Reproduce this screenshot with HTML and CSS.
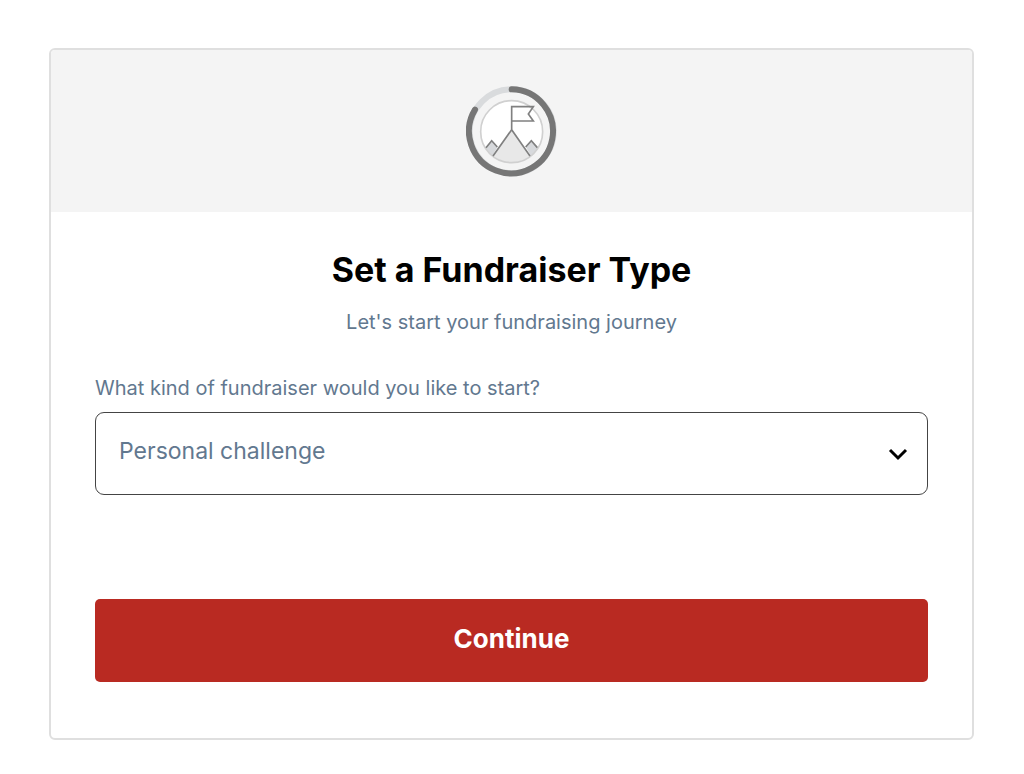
FILE: index.html
```html
<!DOCTYPE html>
<html lang="en">
<head>
<meta charset="utf-8">
<meta name="viewport" content="width=device-width, initial-scale=1">
<title>Set a Fundraiser Type</title>
<link rel="stylesheet" href="styles.css">
</head>
<body>
<main class="card">
  <header class="card-header">
    <svg class="progress" viewBox="32 27 276 276" aria-hidden="true">
      <defs>
        <clipPath id="disc"><circle cx="169" cy="167" r="92"/></clipPath>
      </defs>
      <circle cx="169" cy="166" r="126" fill="none" stroke="#d9dbdd" stroke-width="18"/>
      <path d="M169 40A126 126 0 1 1 59 101" fill="none" stroke="#767676" stroke-width="18" stroke-linecap="round"/>
      <circle cx="169" cy="167" r="93" fill="#fff"/>
      <g clip-path="url(#disc)">
        <path d="M86 220L109 194L126 214L110 242V262H80ZM252 220L228 194L212 214L228 242V262H258Z" fill="#d7d9dc"/>
        <path d="M169 161L98 262H240Z" fill="#e8e8e8"/>
      </g>
      <circle cx="169" cy="167" r="93" fill="none" stroke="#d0d0d0" stroke-width="5"/>
      <path d="M92 215L109 194L126 213M211 213L228 194L246 215M113 240L169 161L224 240M169 161V92H234L219 114L234 135H169" fill="none" stroke="#808080" stroke-width="5" stroke-linejoin="miter"/>
    </svg>
  </header>
  <form class="card-body">
    <h1 class="title">Set a Fundraiser Type</h1>
    <p class="subtitle">Let's start your fundraising journey</p>
    <label class="label" for="kind">What kind of fundraiser would you like to start?</label>
    <div class="select-wrap">
      <select class="select" id="kind">
        <option>Personal challenge</option>
      </select>
      <svg class="chevron" viewBox="0 0 20 20" aria-hidden="true"><path d="M2 6L10 14L18 6" fill="none" stroke="#000" stroke-width="3"/></svg>
    </div>
    <button class="button" type="button">Continue</button>
  </form>
</main>
</body>
</html>
```
FILE: styles.css
```css
* {
  box-sizing: border-box;
}

body {
  margin: 0;
  padding: 48px 50px 34px 49px;
  background: #fff;
  color: #000;
  font-family: Inter, "Liberation Sans", sans-serif;
}

.card {
  border: 2px solid #dfdfdf;
  border-radius: 6px;
  overflow: hidden;
}

.card-header {
  display: flex;
  justify-content: center;
  padding: 35px 0;
  background: #f4f4f4;
}

.progress {
  width: 92px;
  height: 92px;
}

.card-body {
  display: flex;
  flex-direction: column;
  padding: 36px 44px 56px;
}

.title {
  margin: 0;
  font-size: 34px;
  line-height: 44px;
  font-weight: 700;
  text-align: center;
}

.subtitle {
  margin: 16px 0 0;
  color: #62788f;
  font-size: 20px;
  line-height: 28px;
  text-align: center;
}

.label {
  margin-top: 38px;
  color: #62788f;
  font-size: 20px;
  line-height: 28px;
}

.select-wrap {
  display: grid;
  align-items: center;
  margin-top: 10px;
}

.select,
.chevron {
  grid-area: 1 / 1;
}

.select {
  width: 100%;
  padding: 24px 56px 28px 23px;
  border: 1px solid #444;
  border-radius: 9px;
  appearance: none;
  background: #fff;
  color: #62788f;
  font-family: inherit;
  font-size: 23px;
  line-height: 29px;
}

.chevron {
  justify-self: end;
  width: 20px;
  height: 20px;
  margin-right: 20px;
  pointer-events: none;
}

.button {
  margin-top: 104px;
  padding: 24px 24px 27px;
  border: 0;
  border-radius: 5px;
  background: #b92a22;
  color: #fff;
  font-family: inherit;
  font-size: 26px;
  line-height: 32px;
  font-weight: 700;
}
```
